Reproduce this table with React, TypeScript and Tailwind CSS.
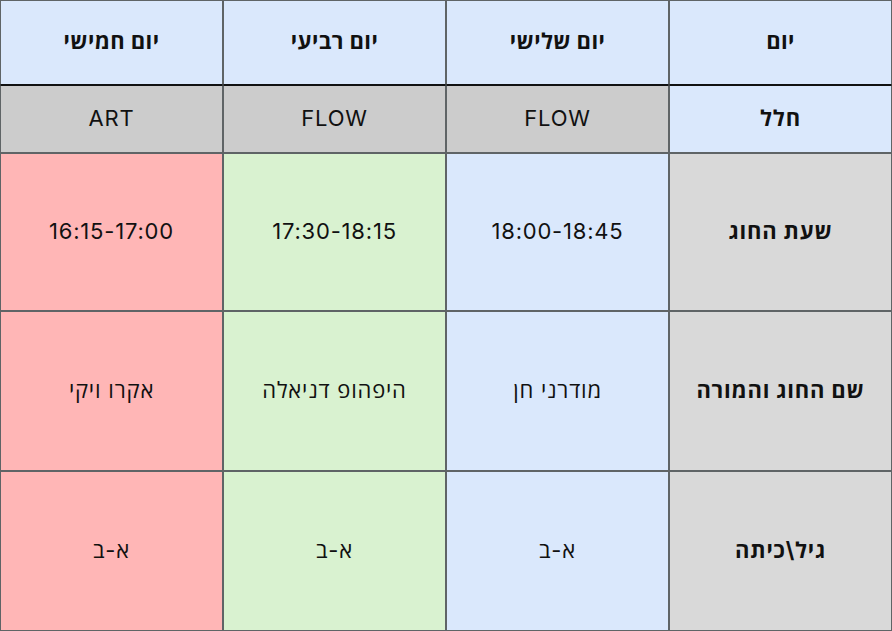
import React from "react";

const font = { fontFamily: 'Inter, "Open Sans", "DejaVu Sans", sans-serif' };

type Cell = { t: string; bg: string; bold?: boolean; topDark?: boolean; num?: boolean };

const rows: { h: string; cells: Cell[] }[] = [
  {
    h: "h-[85px]",
    cells: [
      { t: "יום", bg: "bg-[#dae8fc]", bold: true },
      { t: "יום שלישי", bg: "bg-[#dae8fc]", bold: true },
      { t: "יום רביעי", bg: "bg-[#dae8fc]", bold: true },
      { t: "יום חמישי", bg: "bg-[#dae8fc]", bold: true },
    ],
  },
  {
    h: "h-[68px]",
    cells: [
      { t: "חלל", bg: "bg-[#dae8fc]", bold: true, topDark: true },
      { t: "FLOW", bg: "bg-[#cccccc]", topDark: true, num: true },
      { t: "FLOW", bg: "bg-[#cccccc]", topDark: true, num: true },
      { t: "ART", bg: "bg-[#cccccc]", topDark: true, num: true },
    ],
  },
  {
    h: "h-[158px]",
    cells: [
      { t: "שעת החוג", bg: "bg-[#d9d9d9]", bold: true },
      { t: "18:00-18:45", bg: "bg-[#dae8fc]", num: true },
      { t: "17:30-18:15", bg: "bg-[#d9f2d0]", num: true },
      { t: "16:15-17:00", bg: "bg-[#ffb6b6]", num: true },
    ],
  },
  {
    h: "h-[160px]",
    cells: [
      { t: "שם החוג והמורה", bg: "bg-[#d9d9d9]", bold: true },
      { t: "מודרני חן", bg: "bg-[#dae8fc]" },
      { t: "היפהופ דניאלה", bg: "bg-[#d9f2d0]" },
      { t: "אקרו ויקי", bg: "bg-[#ffb6b6]" },
    ],
  },
  {
    h: "h-[160px]",
    cells: [
      { t: "גיל\\כיתה", bg: "bg-[#d9d9d9]", bold: true },
      { t: "א-ב", bg: "bg-[#dae8fc]" },
      { t: "א-ב", bg: "bg-[#d9f2d0]" },
      { t: "א-ב", bg: "bg-[#ffb6b6]" },
    ],
  },
];

export default function App() {
  return (
    <div dir="rtl" className="w-[892px] h-[631px] flex flex-col bg-white text-[#111]" style={font}>
      {rows.map((r, i) => (
        <div key={i} className={`grid grid-cols-4 ${r.h}`}>
          {r.cells.map((c, j) => (
            <div
              key={j}
              className={`${c.bg} flex items-center justify-center border border-[#5f6466] ${
                c.topDark ? "border-t-[#111]" : ""
              } ${i === 0 ? "border-b-[#111]" : ""} ${
                c.bold ? "font-bold text-[22px]" : "text-[22px]"
              } ${c.num ? "tracking-[0.8px]" : i === 0 ? "tracking-[0.4px]" : "tracking-[0.8px]"}`}
            >
              <span className="-mt-[2px]">{c.t}</span>
            </div>
          ))}
        </div>
      ))}
    </div>
  );
}
